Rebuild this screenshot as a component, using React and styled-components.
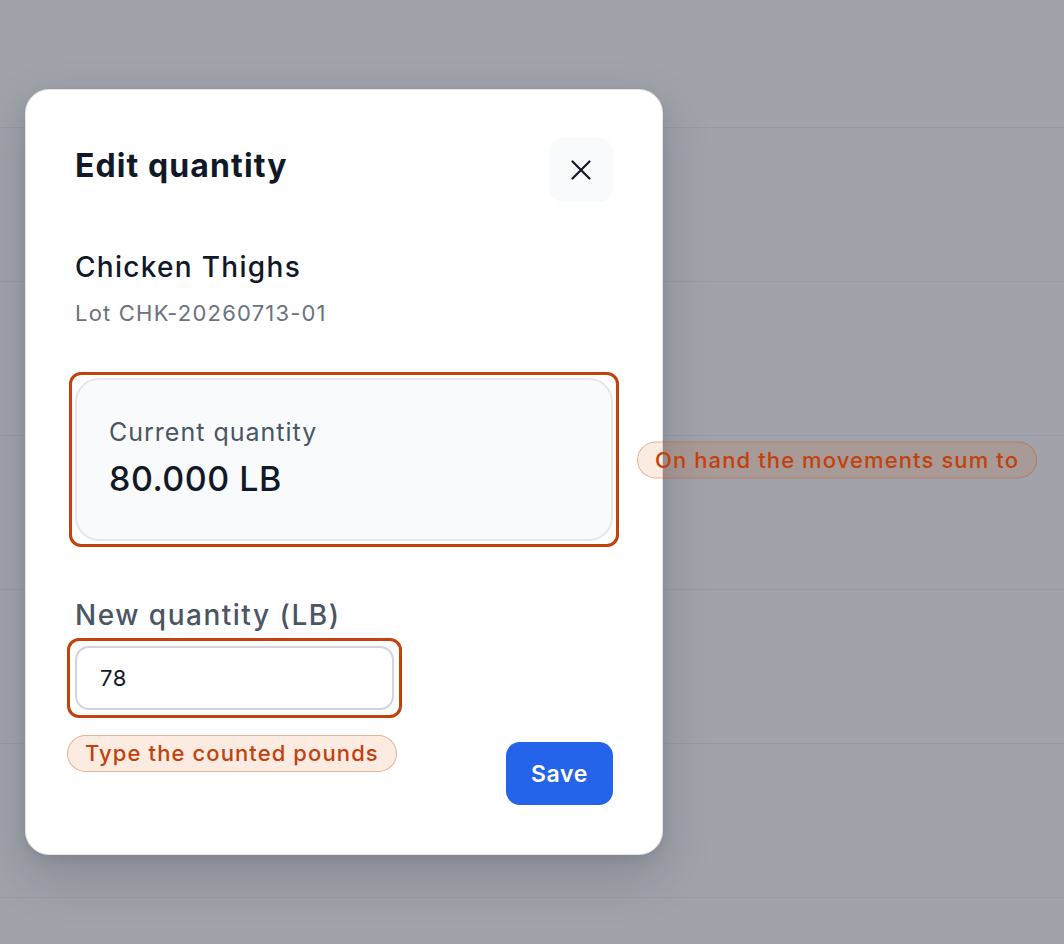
import React from 'react';
import styled, { createGlobalStyle, css } from 'styled-components';

const GlobalStyle = createGlobalStyle`
  html, body {
    margin: 0;
    padding: 0;
    height: 100%;
  }
  body {
    font-family: Inter, "Noto Sans", "Liberation Sans", sans-serif;
    -webkit-font-smoothing: antialiased;
  }
`;

const colors = {
  ink: '#111827',
  slate: '#4b5563',
  muted: '#6b7280',
  line: '#e5e7eb',
  field: '#d1d5db',
  soft: '#f8fafc',
  blue: '#2563eb',
  flag: '#c2410c',
};

// Dimmed page behind the dialog
const Backdrop = styled.div`
  position: relative;
  width: 100%;
  height: 944px;
  overflow: hidden;
  background: #a0a3aa;
`;

const RowList = styled.div`
  display: flex;
  flex-direction: column;
  padding-top: 127px;
`;

const Row = styled.div`
  height: 153px;
  border-top: 1px solid #979ba3;
`;

const Dialog = styled.div`
  position: absolute;
  left: 25px;
  top: 89px;
  width: 638px;
  box-sizing: border-box;
  padding: 48px 49px 49px;
  background: #fff;
  border: 1px solid #e3e5e9;
  border-radius: 24px;
  box-shadow: 0 20px 50px rgba(17, 24, 39, 0.18), 0 4px 12px rgba(17, 24, 39, 0.08);
  display: flex;
  flex-direction: column;
`;

const Header = styled.header`
  display: flex;
  align-items: center;
  justify-content: space-between;
  height: 64px;
`;

const Title = styled.h2`
  margin: 0 0 9px;
  font-size: 32px;
  line-height: 40px;
  font-weight: 700;
  letter-spacing: 1.1px;
  color: ${colors.ink};
`;

const CloseButton = styled.button`
  width: 64px;
  height: 64px;
  border: none;
  border-radius: 14px;
  background: ${colors.soft};
  display: flex;
  align-items: center;
  justify-content: center;
  color: ${colors.ink};
  padding: 0;
`;

const ItemName = styled.div`
  margin-top: 47px;
  font-size: 28px;
  line-height: 36px;
  font-weight: 500;
  letter-spacing: 1.3px;
  color: ${colors.ink};
`;

const LotText = styled.div`
  margin-top: 15px;
  font-size: 22px;
  line-height: 26px;
  letter-spacing: 1.2px;
  color: ${colors.muted};
`;

const flagged = css`
  &::after {
    content: '';
    position: absolute;
    inset: -8px;
    border: 3px solid ${colors.flag};
    border-radius: 12px;
    pointer-events: none;
  }
`;

const QtyCard = styled.div`
  position: relative;
  margin-top: 52px;
  padding: 37px 32px 39px;
  background: ${colors.soft};
  border: 2px solid ${colors.line};
  border-radius: 24px;
  ${(p) => p.$flagged && flagged}
`;

const CardLabel = styled.div`
  font-size: 25px;
  line-height: 30px;
  letter-spacing: 1px;
  color: ${colors.slate};
`;

const CardValue = styled.div`
  margin-top: 11px;
  font-size: 34px;
  line-height: 42px;
  font-weight: 500;
  letter-spacing: 0.5px;
  color: ${colors.ink};
`;

const Note = styled.span`
  position: absolute;
  white-space: nowrap;
  padding: 4px 17px 5px;
  font-size: 22px;
  line-height: 26px;
  font-weight: 500;
  letter-spacing: 1.1px;
  color: ${colors.flag};
  background: rgba(234, 88, 12, 0.12);
  border: 1.5px solid rgba(194, 65, 12, 0.35);
  border-radius: 999px;
  ${(p) =>
    p.$side === 'right'
      ? css`
          left: calc(100% + 26px);
          top: 50%;
          transform: translateY(-50%);
        `
      : css`
          left: -8px;
          top: calc(100% + 25px);
        `}
`;

const FieldLabel = styled.label`
  display: block;
  margin-top: 57px;
  font-size: 28px;
  line-height: 34px;
  font-weight: 500;
  letter-spacing: 1.5px;
  color: ${colors.slate};
`;

const FieldWrap = styled.div`
  position: relative;
  width: 319px;
  margin-top: 14px;
  ${(p) => p.$flagged && flagged}
`;

const Input = styled.input`
  display: block;
  width: 100%;
  height: 64px;
  box-sizing: border-box;
  padding: 0 23px;
  font-family: inherit;
  font-size: 22px;
  letter-spacing: 0.5px;
  color: ${colors.ink};
  background: #fff;
  border: 2px solid ${colors.field};
  border-radius: 14px;
  outline: none;
`;

const Footer = styled.div`
  display: flex;
  justify-content: flex-end;
  margin-top: 32px;
`;

const SaveButton = styled.button`
  width: 107px;
  height: 63px;
  border: none;
  border-radius: 14px;
  background: ${colors.blue};
  color: #fff;
  font-family: inherit;
  font-size: 23px;
  font-weight: 600;
  letter-spacing: 0.6px;
`;

const XIcon = () => (
  <svg width="20" height="20" viewBox="0 0 20 20" fill="none" stroke="currentColor" strokeWidth="2.2" strokeLinecap="round">
    <path d="M1.5 1.5l17 17M18.5 1.5l-17 17" />
  </svg>
);

export default function App() {
  return (
    <>
      <GlobalStyle />
      <Backdrop>
        <RowList>
          {[0, 1, 2, 3, 4, 5].map((i) => (
            <Row key={i} />
          ))}
        </RowList>
        <Dialog role="dialog">
          <Header>
            <Title>Edit quantity</Title>
            <CloseButton aria-label="Close">
              <XIcon />
            </CloseButton>
          </Header>
          <ItemName>Chicken Thighs</ItemName>
          <LotText>Lot CHK-20260713-01</LotText>
          <QtyCard $flagged>
            <CardLabel>Current quantity</CardLabel>
            <CardValue>80.000 LB</CardValue>
            <Note $side="right">On hand the movements sum to</Note>
          </QtyCard>
          <FieldLabel htmlFor="qty">New quantity (LB)</FieldLabel>
          <FieldWrap $flagged>
            <Input id="qty" defaultValue="78" />
            <Note $side="below">Type the counted pounds</Note>
          </FieldWrap>
          <Footer>
            <SaveButton>Save</SaveButton>
          </Footer>
        </Dialog>
      </Backdrop>
    </>
  );
}
